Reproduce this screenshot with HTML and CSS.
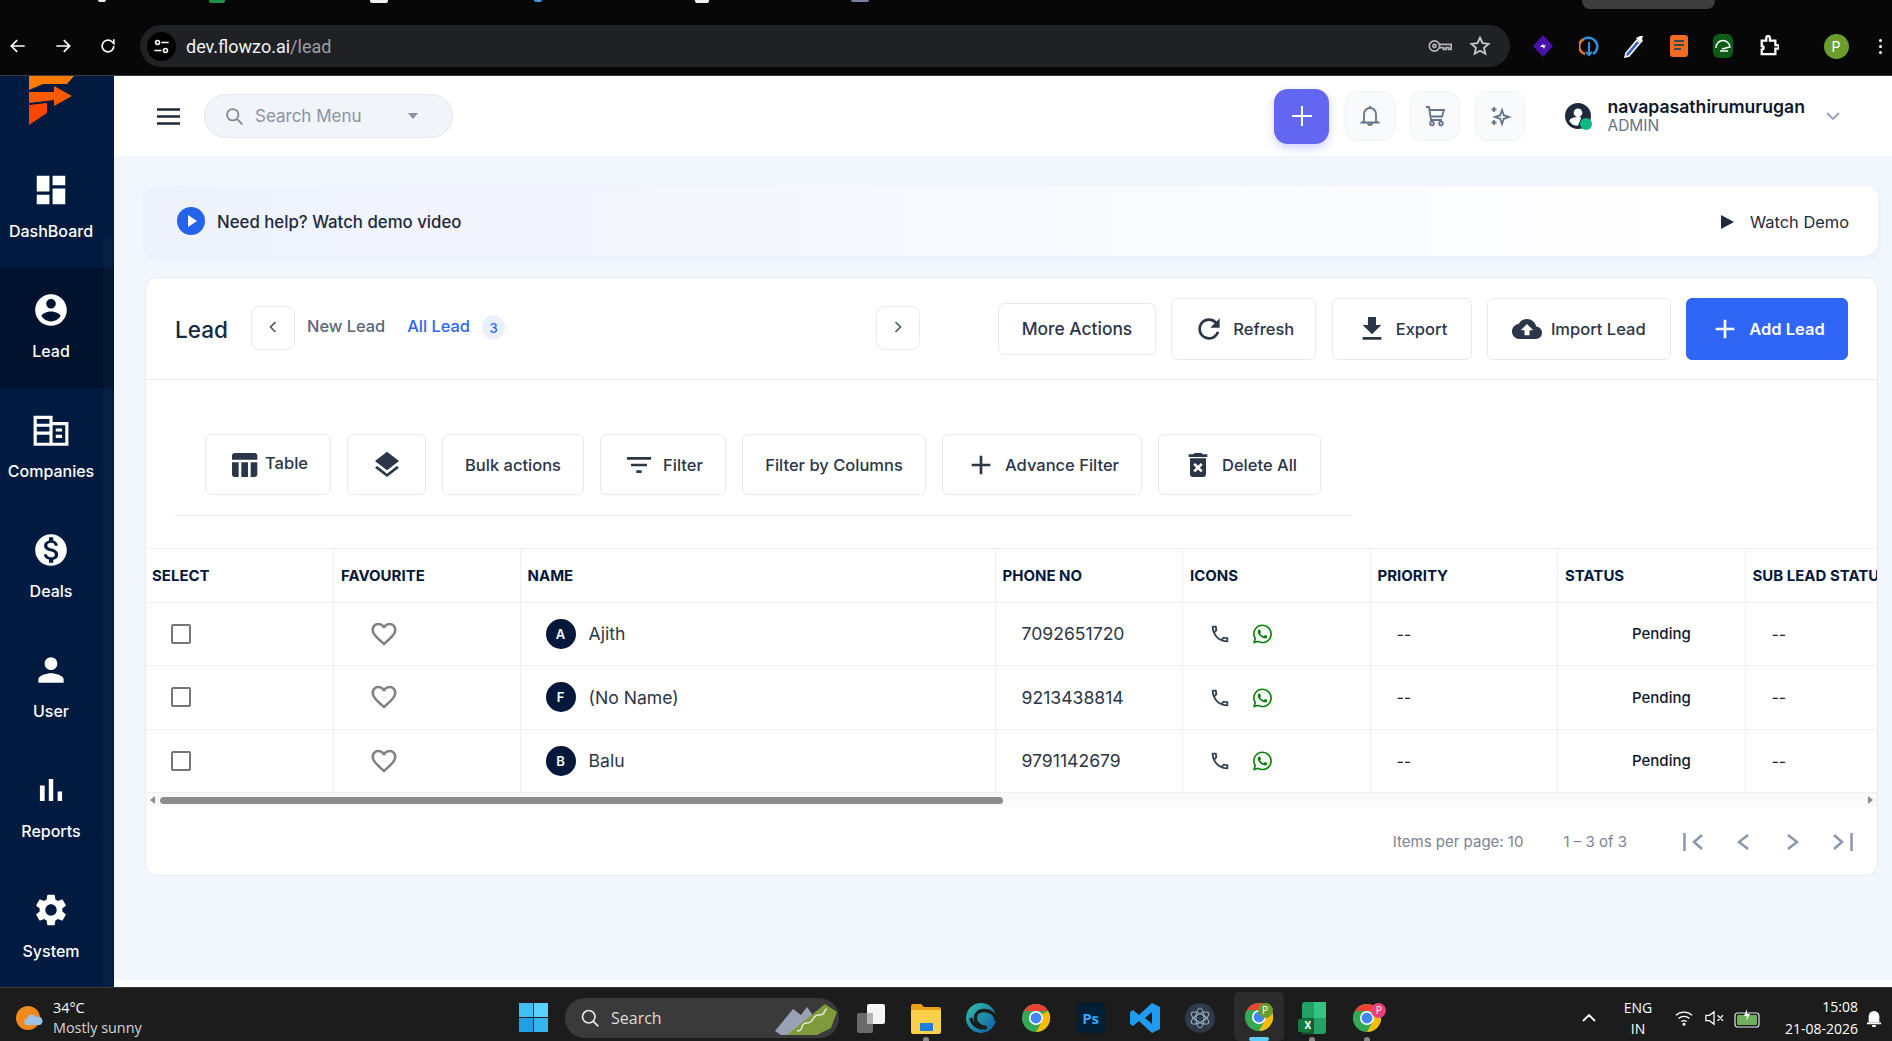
FILE: index.html
```html
<!DOCTYPE html>
<html lang="en">
<head>
    <meta charset="UTF-8">
    <meta name="viewport" content="width=device-width, initial-scale=1.0">
    <title>Lead</title>
    <link rel="stylesheet" href="styles.css">
</head>
<body>
    <svg class="sprite" width="0" height="0">
        <symbol id="i-phone" viewBox="0 0 24 24"><path d="M6.54 5c.06.89.21 1.76.45 2.59l-1.2 1.2c-.41-1.2-.67-2.47-.76-3.79h1.51m9.86 12.02c.85.24 1.72.39 2.6.45v1.49c-1.32-.09-2.59-.35-3.8-.75l1.2-1.19M7.5 3H4c-.55 0-1 .45-1 1 0 9.39 7.61 17 17 17 .55 0 1-.45 1-1v-3.49c0-.55-.45-1-1-1-1.24 0-2.45-.2-3.57-.57-.1-.04-.21-.05-.31-.05-.26 0-.51.1-.71.29l-2.2 2.2c-2.83-1.45-5.15-3.76-6.59-6.59l2.2-2.2c.28-.28.36-.67.25-1.02C8.7 6.45 8.5 5.25 8.5 4c0-.55-.45-1-1-1z"/></symbol>
        <symbol id="i-whatsapp" viewBox="0 0 16 16"><path d="M13.601 2.326A7.854 7.854 0 0 0 7.994 0C3.627 0 .068 3.558.064 7.926c0 1.399.366 2.76 1.057 3.965L0 16l4.204-1.102a7.933 7.933 0 0 0 3.79.965h.004c4.368 0 7.926-3.558 7.93-7.93A7.898 7.898 0 0 0 13.6 2.326zM7.994 14.521a6.573 6.573 0 0 1-3.356-.92l-.24-.144-2.494.654.666-2.433-.156-.251a6.56 6.56 0 0 1-1.007-3.505c0-3.626 2.957-6.584 6.591-6.584a6.56 6.56 0 0 1 4.66 1.931 6.557 6.557 0 0 1 1.928 4.66c-.004 3.639-2.961 6.592-6.592 6.592zm3.615-4.934c-.197-.099-1.17-.578-1.353-.646-.182-.065-.315-.099-.445.099-.133.197-.513.646-.627.775-.114.133-.232.148-.43.05-.197-.1-.836-.308-1.592-.985-.59-.525-.985-1.175-1.103-1.372-.114-.198-.011-.304.088-.403.087-.088.197-.232.296-.346.1-.114.133-.198.198-.33.065-.134.034-.248-.015-.347-.05-.099-.445-1.076-.612-1.47-.16-.389-.323-.335-.445-.34-.114-.007-.247-.007-.38-.007a.729.729 0 0 0-.529.247c-.182.198-.691.677-.691 1.654 0 .977.71 1.916.81 2.049.098.133 1.394 2.132 3.383 2.992.47.205.84.326 1.129.418.475.152.904.129 1.246.08.38-.058 1.171-.48 1.338-.943.164-.464.164-.86.114-.943-.049-.084-.182-.133-.38-.232z"/></symbol>
        <symbol id="i-heart" viewBox="0 0 24 24"><path d="M16.5 3c-1.74 0-3.41.81-4.5 2.09C10.91 3.81 9.24 3 7.5 3 4.42 3 2 5.42 2 8.5c0 3.78 3.4 6.86 8.55 11.54L12 21.35l1.45-1.32C18.6 15.36 22 12.28 22 8.5 22 5.42 19.58 3 16.5 3zm-4.4 15.55l-.1.1-.1-.1C7.14 14.24 4 11.39 4 8.5 4 6.5 5.5 5 7.5 5c1.54 0 3.04.99 3.57 2.36h1.87C13.46 5.99 14.96 5 16.5 5c2 0 3.5 1.5 3.5 3.5 0 2.89-3.14 5.74-7.9 10.05z"/></symbol>
        <symbol id="i-chrome" viewBox="0 0 32 32">
            <circle cx="16" cy="16" r="15" fill="#34a853"/>
            <path d="M16 1a15 15 0 0 1 13 7.500L16 8.500H8L3 8.800A15 15 0 0 1 16 1z" fill="#ea4335"/>
            <path d="M29 8.500A15 15 0 0 1 16 31l6.500-11.500L22.500 12z" fill="#fbbc04"/>
            <circle cx="16" cy="16" r="7.500" fill="#fff"/>
            <circle cx="16" cy="16" r="5.800" fill="#4285f4"/>
        </symbol>
    </svg>

    <header class="chrome">
        <div class="chrome-tabs">
            <i class="tab-bit bit-a"></i>
            <i class="tab-bit bit-b"></i>
            <i class="tab-bit bit-c"></i>
            <i class="tab-bit bit-d"></i>
            <i class="tab-bit bit-e"></i>
            <i class="tab-bit bit-f"></i>
            <span class="tab-stub"></span>
        </div>
        <div class="chrome-bar">
            <div class="nav-btns">
                <svg viewBox="0 0 24 24" class="chrome-icon"><path d="M20 12H5M11 5l-7 7 7 7"/></svg>
                <svg viewBox="0 0 24 24" class="chrome-icon"><path d="M4 12h15M13 5l7 7-7 7"/></svg>
                <svg viewBox="0 0 24 24" class="chrome-icon"><path d="M19 12a7 7 0 1 1-2.200-5.100L19 9V4"/></svg>
            </div>
            <div class="address">
                <span class="site-info">
                    <svg viewBox="0 0 24 24" class="site-icon"><circle cx="7" cy="7" r="2.500"/><circle cx="17" cy="17" r="2.500"/><path d="M12 7h9M3 17h9"/></svg>
                </span>
                <span class="url">dev.flowzo.ai<span class="url-path">/lead</span></span>
                <svg viewBox="0 0 28 16" class="key-icon"><circle cx="7.500" cy="8" r="6"/><circle cx="7.500" cy="8" r="1.800"/><path d="M13.500 6H27v6h-3v-2h-3v2h-3v-2h-4.500"/></svg>
                <svg viewBox="0 0 24 24" class="star-icon"><path d="M12 3l2.800 6 6.500.7-4.900 4.300 1.400 6.500L12 17.200 6.200 20.500l1.400-6.500L2.700 9.700 9.200 9z"/></svg>
            </div>
            <div class="extensions">
                <svg viewBox="0 0 20 24" width="20" height="24"><path d="M10 1l10 11-10 11L0 12z" fill="#4a12a8"/><path d="M7 13l3-3 1 2 2-2-2 5-1-2z" fill="#fff"/></svg>
                <svg viewBox="0 0 20 24" width="20" height="24" fill="none" stroke-width="2.500"><path d="M6 20a8 8 0 0 1-1-15" stroke="#e87a2a"/><path d="M5 5a8 8 0 1 1 9 15" stroke="#2f8fe0"/><path d="M10 8v13M7 18l3 3 3-3" stroke="#2f8fe0" stroke-width="2"/></svg>
                <svg viewBox="0 0 20 24" width="20" height="24"><path d="M13 6L2 19l-1 4 4-1L16 9z" fill="#3f62c8" stroke="#fff" stroke-width="1.500"/><path d="M12 4l5 5 2-2-1-2 1-3-3 0-2 1z" fill="#fff"/></svg>
                <svg viewBox="0 0 18 22" width="18" height="22"><rect width="18" height="22" rx="3" fill="#f26b21"/><path d="M4 6h10M4 10h10M4 14h7" stroke="#34495e" stroke-width="2"/></svg>
                <svg viewBox="0 0 20 24" width="20" height="24" fill="none"><rect width="20" height="24" rx="6" fill="#0f5a16"/><path d="M3 14a7 7 0 0 1 14-1l-8 2" stroke="#fff" stroke-width="1.500"/><path d="M7 17h8" stroke="#fff" stroke-width="1.500"/></svg>
                <svg viewBox="0 0 22 24" width="20" height="22" fill="none" stroke="#fff" stroke-width="2.500"><path d="M3 6h5V3a2 2 0 0 1 4 0v3h6v5h2a2 2 0 0 1 0 4h-2v6H3v-5a2 2 0 0 0 0-4V6z"/></svg>
            </div>
            <span class="profile-dot">P</span>
            <span class="more-dots"><i></i><i></i><i></i></span>
        </div>
    </header>

    <div class="app">
        <aside class="sidebar">
            <div class="logo">
                <svg viewBox="0 0 45 49" width="45" height="49">
                    <path d="M0 0H45L38 8H14L0 14z" fill="#ff7a00"/>
                    <path d="M0 16H25V10L43 20 25 30V24L0 27z" fill="#ff5a00"/>
                    <path d="M0 29L18 27V37L0 49z" fill="#ff4500"/>
                </svg>
            </div>
            <a class="side-item">
                <svg viewBox="0 0 24 24"><path d="M3 13h8V3H3v10zm0 8h8v-6H3v6zm10 0h8V11h-8v10zm0-18v6h8V3h-8z"/></svg>
                <span>DashBoard</span>
            </a>
            <a class="side-item active">
                <svg viewBox="0 0 24 24"><path d="M12 2C6.480 2 2 6.480 2 12s4.480 10 10 10 10-4.480 10-10S17.520 2 12 2zm0 3c1.660 0 3 1.340 3 3s-1.340 3-3 3-3-1.340-3-3 1.340-3 3-3zm0 14.200c-2.500 0-4.710-1.280-6-3.220.030-1.990 4-3.080 6-3.080 1.990 0 5.970 1.090 6 3.080-1.290 1.940-3.500 3.220-6 3.220z"/></svg>
                <span>Lead</span>
            </a>
            <a class="side-item">
                <svg viewBox="0 0 24 24"><path fill-rule="evenodd" d="M1 3h12v4h10v15H1zM3 5v3h8V5zm0 5v3h8v-3zm0 5v5h8v-5zm10-6v11h8V9zm2 2h4v2h-4zm0 4h4v2h-4z"/></svg>
                <span>Companies</span>
            </a>
            <a class="side-item">
                <svg viewBox="0 0 24 24"><path d="M12 2C6.480 2 2 6.480 2 12s4.480 10 10 10 10-4.480 10-10S17.520 2 12 2zm1.410 16.090V20h-2.670v-1.930c-1.710-.36-3.160-1.460-3.270-3.400h1.960c.1 1.050.82 1.870 2.650 1.870 1.960 0 2.400-.98 2.400-1.590 0-.83-.44-1.610-2.670-2.140-2.480-.6-4.180-1.620-4.180-3.670 0-1.720 1.390-2.840 3.110-3.210V4h2.670v1.950c1.860.45 2.790 1.860 2.850 3.390H14.300c-.05-1.110-.64-1.870-2.220-1.870-1.500 0-2.400.68-2.400 1.640 0 .84.65 1.390 2.670 1.910s4.180 1.390 4.180 3.910c-.01 1.830-1.380 2.830-3.120 3.160z"/></svg>
                <span>Deals</span>
            </a>
            <a class="side-item">
                <svg viewBox="0 0 24 24"><path d="M12 12c2.210 0 4-1.790 4-4s-1.790-4-4-4-4 1.790-4 4 1.790 4 4 4zm0 2c-2.670 0-8 1.340-8 4v2h16v-2c0-2.660-5.330-4-8-4z"/></svg>
                <span>User</span>
            </a>
            <a class="side-item">
                <svg viewBox="0 0 24 24"><path d="M5 9.200h3V19H5zM10.600 5h2.800v14h-2.800zm5.600 8H19v6h-2.800z"/></svg>
                <span>Reports</span>
            </a>
            <a class="side-item">
                <svg viewBox="0 0 24 24"><path d="M19.140 12.940c.04-.3.06-.61.06-.94 0-.32-.02-.64-.07-.94l2.030-1.580c.18-.14.23-.41.12-.61l-1.920-3.320c-.12-.22-.37-.29-.59-.22l-2.390.96c-.5-.38-1.030-.7-1.620-.94l-.36-2.540c-.04-.24-.24-.41-.48-.41h-3.840c-.24 0-.43.17-.47.41l-.36 2.540c-.59.24-1.130.57-1.620.94l-2.390-.96c-.22-.08-.47 0-.59.22L2.740 8.870c-.12.21-.08.47.12.61l2.030 1.580c-.05.3-.09.63-.09.94s.02.64.07.94l-2.030 1.580c-.18.14-.23.41-.12.61l1.920 3.320c.12.22.37.29.59.22l2.390-.96c.5.38 1.030.7 1.620.94l.36 2.540c.05.24.24.41.48.41h3.840c.24 0 .44-.17.47-.41l.36-2.540c.59-.24 1.130-.56 1.620-.94l2.390.96c.22.08.47 0 .59-.22l1.920-3.320c.12-.22.07-.47-.12-.61l-2.010-1.580zM12 15.600c-1.980 0-3.600-1.620-3.600-3.600s1.620-3.600 3.600-3.600 3.600 1.620 3.600 3.600-1.620 3.600-3.600 3.600z"/></svg>
                <span>System</span>
            </a>
            <span class="side-scroll"></span>
        </aside>

        <div class="main">
            <div class="topbar">
                <svg viewBox="0 0 23 17" class="hamburger"><path d="M0 1.500h23M0 8.500h23M0 15.500h23"/></svg>
                <div class="search-menu">
                    <svg viewBox="0 0 24 24" class="search-glass"><circle cx="10" cy="10" r="6.500"/><path d="M15 15l6 6"/></svg>
                    <span class="search-text">Search Menu</span>
                    <span class="search-caret"></span>
                </div>
                <div class="top-actions">
                    <button class="plus-btn">
                        <svg viewBox="0 0 24 24"><path d="M12 2v20M2 12h20"/></svg>
                    </button>
                    <button class="icon-btn">
                        <svg viewBox="0 0 24 24"><path d="M6 17V10a6 6 0 0 1 12 0v7l2 1.500H4zM12 2v2M10 19a2 2 0 0 0 4 0"/></svg>
                    </button>
                    <button class="icon-btn">
                        <svg viewBox="0 0 24 24"><path d="M3 3h3l2 13h11M7 6h14l-2 6.500H8"/><circle cx="9" cy="19.500" r="1.800"/><circle cx="18" cy="19.500" r="1.800"/></svg>
                    </button>
                    <button class="icon-btn">
                        <svg viewBox="0 0 24 24"><path d="M14 6l1.800 5.200L21 13l-5.200 1.800L14 20l-1.800-5.200L7 13l5.200-1.800zM6 3v5M3.500 5.500h5M6 16v5M3.500 18.500h5"/></svg>
                    </button>
                </div>
                <div class="user-box">
                    <span class="user-avatar">
                        <svg viewBox="0 0 24 24" width="26" height="26"><path fill="#1e293b" d="M12 0a12 12 0 1 0 0 24 12 12 0 0 0 0-24zm0 5a4 4 0 1 1 0 8 4 4 0 0 1 0-8zm0 16a9 9 0 0 1-8-4.500c1-3 5.500-3.500 8-3.500 1 0 2 .1 3 .3z"/></svg>
                        <i class="online-dot"></i>
                    </span>
                    <span class="user-text">
                        <strong>navapasathirumurugan</strong>
                        <small>ADMIN</small>
                    </span>
                    <svg viewBox="0 0 14 8" class="user-chevron"><path d="M1 1l6 6 6-6"/></svg>
                </div>
            </div>

            <main class="content">
                <div class="help-banner">
                    <span class="play-circle"><i></i></span>
                    <span class="help-text">Need help? Watch demo video</span>
                    <span class="watch-demo"><i></i>Watch Demo</span>
                </div>

                <section class="card">
                    <div class="card-head">
                        <h1>Lead</h1>
                        <div class="tabs">
                            <button class="tab-arrow"><svg viewBox="0 0 8 12"><path d="M6.500 1L1.500 6l5 5"/></svg></button>
                            <span class="tab">New Lead</span>
                            <span class="tab current">All Lead</span>
                            <span class="tab-count">3</span>
                            <button class="tab-arrow push-right"><svg viewBox="0 0 8 12"><path d="M1.500 1l5 5-5 5"/></svg></button>
                        </div>
                        <div class="head-actions">
                            <button class="btn short w-more">More Actions</button>
                            <button class="btn tall w-refresh"><svg viewBox="0 0 24 24"><path d="M17.650 6.350C16.200 4.900 14.210 4 12 4c-4.420 0-7.990 3.580-7.990 8s3.570 8 7.990 8c3.730 0 6.840-2.550 7.730-6h-2.080c-.82 2.330-3.040 4-5.650 4-3.310 0-6-2.690-6-6s2.690-6 6-6c1.660 0 3.140.69 4.220 1.780L13 11h7V4l-2.350 2.350z"/></svg>Refresh</button>
                            <button class="btn tall w-export"><svg viewBox="0 0 24 24"><path d="M19 9h-4V3H9v6H5l7 7 7-7zM5 18v2h14v-2H5z"/></svg>Export</button>
                            <button class="btn tall w-import"><svg viewBox="0 0 24 24" class="cloud"><path d="M19.350 10.040C18.670 6.590 15.640 4 12 4 9.110 4 6.600 5.640 5.350 8.040 2.340 8.360 0 10.910 0 14c0 3.310 2.690 6 6 6h13c2.760 0 5-2.240 5-5 0-2.640-2.050-4.780-4.650-4.960zM14 13v4h-4v-4H7l5-5 5 5h-3z"/></svg>Import Lead</button>
                            <button class="btn tall primary w-add"><svg viewBox="0 0 24 24"><path d="M19 13h-6v6h-2v-6H5v-2h6V5h2v6h6v2z"/></svg>Add Lead</button>
                        </div>
                    </div>

                    <div class="toolbar">
                        <button class="btn tool w-table"><svg viewBox="0 0 24 24" class="tight"><path d="M10 10.020h5V21h-5zM17 21h3c1.100 0 2-.9 2-2v-9h-5v11zm3-18H5c-1.100 0-2 .9-2 2v3h19V5c0-1.100-.9-2-2-2zM3 19c0 1.100.9 2 2 2h3V10H3v9z"/></svg><span class="raised">Table</span></button>
                        <button class="btn tool w-layers"><svg viewBox="0 0 24 24" class="solo"><path d="M11.990 18.540l-7.370-5.730L3 14.070l9 7 9-7-1.630-1.270-7.380 5.740zM12 16l7.360-5.730L21 9l-9-7-9 7 1.630 1.270L12 16z"/></svg></button>
                        <button class="btn tool w-bulk">Bulk actions</button>
                        <button class="btn tool w-filter"><svg viewBox="0 0 24 24"><path d="M10 18h4v-2h-4v2zM3 6v2h18V6H3zm3 7h12v-2H6v2z"/></svg>Filter</button>
                        <button class="btn tool w-columns">Filter by Columns</button>
                        <button class="btn tool w-advance"><svg viewBox="0 0 24 24"><path d="M19 13h-6v6h-2v-6H5v-2h6V5h2v6h6v2z"/></svg>Advance Filter</button>
                        <button class="btn tool w-delete"><svg viewBox="0 0 24 24"><path d="M6 19c0 1.100.9 2 2 2h8c1.100 0 2-.9 2-2V7H6v12zm2.460-7.120l1.410-1.410L12 12.590l2.120-2.120 1.410 1.410L13.410 14l2.120 2.120-1.410 1.410L12 15.410l-2.120 2.120-1.410-1.410L10.590 14l-2.130-2.120zM15.500 4l-1-1h-5l-1 1H5v2h14V4z"/></svg>Delete All</button>
                    </div>

                    <div class="table-wrap">
                        <table class="lead-table">
                            <colgroup>
                                <col class="col-select"><col class="col-fav"><col class="col-name"><col class="col-std"><col class="col-std"><col class="col-std"><col class="col-std"><col class="col-std">
                            </colgroup>
                            <thead>
                                <tr>
                                    <th>SELECT</th><th>FAVOURITE</th><th>NAME</th><th>PHONE NO</th><th>ICONS</th><th>PRIORITY</th><th>STATUS</th><th>SUB LEAD STATUS</th>
                                </tr>
                            </thead>
                            <tbody>
                                <tr>
                                    <td class="cell-check"><span class="checkbox"></span></td>
                                    <td class="cell-heart"><svg class="heart"><use href="#i-heart"/></svg></td>
                                    <td><div class="name-cell"><span class="initial">A</span>Ajith</div></td>
                                    <td class="cell-phone">7092651720</td>
                                    <td class="cell-icons"><svg class="ph"><use href="#i-phone"/></svg><svg class="wa"><use href="#i-whatsapp"/></svg></td>
                                    <td class="cell-dash">--</td>
                                    <td class="cell-status">Pending</td>
                                    <td class="cell-dash">--</td>
                                </tr>
                                <tr>
                                    <td class="cell-check"><span class="checkbox"></span></td>
                                    <td class="cell-heart"><svg class="heart"><use href="#i-heart"/></svg></td>
                                    <td><div class="name-cell"><span class="initial">F</span>(No Name)</div></td>
                                    <td class="cell-phone">9213438814</td>
                                    <td class="cell-icons"><svg class="ph"><use href="#i-phone"/></svg><svg class="wa"><use href="#i-whatsapp"/></svg></td>
                                    <td class="cell-dash">--</td>
                                    <td class="cell-status">Pending</td>
                                    <td class="cell-dash">--</td>
                                </tr>
                                <tr>
                                    <td class="cell-check"><span class="checkbox"></span></td>
                                    <td class="cell-heart"><svg class="heart"><use href="#i-heart"/></svg></td>
                                    <td><div class="name-cell"><span class="initial">B</span>Balu</div></td>
                                    <td class="cell-phone">9791142679</td>
                                    <td class="cell-icons"><svg class="ph"><use href="#i-phone"/></svg><svg class="wa"><use href="#i-whatsapp"/></svg></td>
                                    <td class="cell-dash">--</td>
                                    <td class="cell-status">Pending</td>
                                    <td class="cell-dash">--</td>
                                </tr>
                            </tbody>
                        </table>
                    </div>
                    <div class="fake-scroll">
                        <i class="arrow-left"></i>
                        <span class="thumb"></span>
                        <i class="arrow-right"></i>
                    </div>

                    <div class="pager">
                        <span class="pager-text per-page">Items per page: 10</span>
                        <span class="pager-text">1 – 3 of 3</span>
                        <svg viewBox="0 0 22 18" class="pager-icon first"><path d="M1.500 0v18M19 2l-8 7 8 7"/></svg>
                        <svg viewBox="0 0 12 18" class="pager-icon prev"><path d="M11 2L2 9l9 7"/></svg>
                        <svg viewBox="0 0 12 18" class="pager-icon next"><path d="M1 2l9 7-9 7"/></svg>
                        <svg viewBox="0 0 22 18" class="pager-icon last"><path d="M20.500 0v18M3 2l8 7-8 7"/></svg>
                    </div>
                </section>
            </main>
            <div class="main-foot"></div>
        </div>
    </div>

    <footer class="taskbar">
        <div class="weather">
            <svg viewBox="0 0 28 28" width="28" height="28"><circle cx="13" cy="14" r="12" fill="#f08a1c"/><path d="M11 21a4 4 0 0 1 1-7 5 5 0 0 1 9-1 4 4 0 0 1 4 8z" fill="#9cc3e6"/></svg>
            <div class="weather-text"><span>34°C</span><span class="dim">Mostly sunny</span></div>
        </div>
        <div class="task-center">
            <svg viewBox="0 0 29 29" width="29" height="29" class="win-logo">
                <rect width="14" height="14" fill="#3fc0f5"/><rect x="15" width="14" height="14" fill="#5ad1fb"/><rect y="15" width="14" height="14" fill="#1f9fe6"/><rect x="15" y="15" width="14" height="14" fill="#35b4f0"/>
            </svg>
            <div class="task-search">
                <svg viewBox="0 0 24 24" class="task-glass"><circle cx="10.500" cy="10.500" r="7.500"/><path d="M16 16l6 6"/></svg>
                <span>Search</span>
                <svg viewBox="0 0 62 34" width="62" height="34" class="task-scene">
                    <path d="M0 30L18 8l8 6 6-8 10 14-14 14H6z" fill="#9aa0b5"/>
                    <path d="M12 34L34 16 50 3l12 8-6 16-14 7z" fill="#7f9a3a"/>
                    <path d="M22 30c8 0 2-8 10-8s4-8 12-8 4-6 8-6" fill="none" stroke="#e8e8d8" stroke-width="1.500"/>
                </svg>
            </div>
            <span class="tb-app"><svg viewBox="0 0 30 30" width="30" height="30"><rect x="1" y="10" width="16" height="20" rx="2" fill="#6a6a6a"/><rect x="11" y="1" width="18" height="20" rx="2" fill="#f4f4f4"/><rect x="11" y="10" width="6" height="11" fill="#b4b4b4"/></svg></span>
            <span class="tb-app dotted"><svg viewBox="0 0 30 32" width="30" height="32"><path d="M0 4a2 2 0 0 1 2-2h8l3 3h15a2 2 0 0 1 2 2v3H0z" fill="#e8a317"/><path d="M0 8h30v22a2 2 0 0 1-2 2H2a2 2 0 0 1-2-2z" fill="#fbd14b"/><rect x="9" y="21" width="13" height="8" rx="1" fill="#1f7fd6"/></svg></span>
            <span class="tb-app"><svg viewBox="0 0 32 32" width="30" height="30"><defs><linearGradient id="edgeg" x1="0" y1="0" x2="1" y2="1"><stop offset="0" stop-color="#35c1a8"/><stop offset="1" stop-color="#0c59a8"/></linearGradient></defs><circle cx="16" cy="16" r="16" fill="url(#edgeg)"/><path d="M32 19c0-7-6-11-13-11-6 0-9 4-9 8 0 6 6 10 12 10-7 2-15-2-17-10" fill="none" stroke="#1c1c1c" stroke-width="3.500"/></svg></span>
            <span class="tb-app"><svg width="30" height="30"><use href="#i-chrome"/></svg></span>
            <span class="tb-app"><span class="ps-tile">Ps</span></span>
            <span class="tb-app"><svg viewBox="0 0 32 32" width="32" height="32"><path d="M23 1l8 4v22l-8 4-13-12-6 5-3-2v-12l3-2 6 5zM23 10l-7 6 7 6z" fill="#1f9cf0" fill-rule="evenodd"/></svg></span>
            <span class="tb-app"><svg viewBox="0 0 30 30" width="30" height="30" fill="none" stroke="#9fb4c2" stroke-width="1"><circle cx="15" cy="15" r="15" fill="#2f3a48" stroke="none"/><ellipse cx="15" cy="15" rx="10" ry="4" transform="rotate(30 15 15)"/><ellipse cx="15" cy="15" rx="10" ry="4" transform="rotate(-30 15 15)"/><ellipse cx="15" cy="15" rx="10" ry="4" transform="rotate(90 15 15)"/></svg></span>
            <span class="tb-app active-app">
                <svg width="30" height="30"><use href="#i-chrome"/></svg>
                <i class="badge-p green">P</i>
            </span>
            <span class="tb-app dotted"><svg viewBox="0 0 28 32" width="28" height="32"><rect x="4" y="0" width="24" height="32" rx="3" fill="#21a366"/><rect x="16" y="0" width="12" height="16" fill="#33c481"/><rect x="4" y="16" width="12" height="16" fill="#185c37"/><rect y="17" width="13" height="13" rx="2" fill="#107c41"/><text x="6.500" y="27" class="xl-text">X</text></svg></span>
            <span class="tb-app dotted">
                <svg width="30" height="30"><use href="#i-chrome"/></svg>
                <i class="badge-p pink">P</i>
            </span>
        </div>
        <div class="tray">
            <svg viewBox="0 0 14 8" class="tray-chev"><path d="M1 7l6-6 6 6"/></svg>
            <div class="tray-lang"><span>ENG</span><span>IN</span></div>
            <svg viewBox="0 0 20 20" class="tray-icon wifi"><path d="M1 7a13 13 0 0 1 18 0M4 10.500a9 9 0 0 1 12 0M7 14a5 5 0 0 1 6 0"/><circle cx="10" cy="17" r="1"/></svg>
            <svg viewBox="0 0 22 20" class="tray-icon"><path d="M2 7h4l5-4v14l-5-4H2zM15 7l6 6M21 7l-6 6"/></svg>
            <svg viewBox="0 0 26 20" class="tray-battery"><rect x="1" y="5" width="24" height="14" rx="2.500"/><rect x="3" y="7" width="20" height="10" rx="1" class="charge"/><path d="M13 1l-3 7h3l-1 5 4-7h-3z" class="bolt"/></svg>
            <div class="tray-clock"><span>15:08</span><span>21-08-2026</span></div>
            <svg viewBox="0 0 18 24" class="tray-bell"><path d="M3 17V10a6 6 0 0 1 12 0v7z"/><path d="M1 17h16v2H1zM7 20h4v2H7z"/></svg>
        </div>
    </footer>
</body>
</html>
```

FILE: styles.css
```css
* {
    box-sizing: border-box;
}

html, body {
    margin: 0;
    height: 100%;
}

body {
    display: flex;
    flex-direction: column;
    height: 1041px;
    overflow: hidden;
    font-family: Inter, "Liberation Sans", sans-serif;
    color: #2b3648;
    background-color: #fff;
}

button {
    font-family: inherit;
}

.sprite {
    position: absolute;
}

/* browser chrome */
.chrome {
    height: 76px;
    flex: none;
    background-color: #070707;
    border-bottom: 1px solid #3a3a3a;
}

.chrome-tabs {
    height: 25px;
    display: flex;
    padding-right: 177px;
}

.tab-bit {
    height: 2px;
    border-radius: 0 0 2px 2px;
    background-color: #f0f0f0;
}

.bit-a {
    width: 8px;
    margin-left: 98px;
}

.bit-b {
    width: 16px;
    margin-left: 103px;
    height: 3px;
    background-color: #1f8f4a;
}

.bit-c {
    width: 18px;
    margin-left: 145px;
    height: 3px;
}

.bit-d {
    width: 8px;
    margin-left: 146px;
    background-color: #3a9bdc;
}

.bit-e {
    width: 14px;
    margin-left: 153px;
    height: 3px;
}

.bit-f {
    width: 18px;
    margin-left: 142px;
    background-color: #7a7fa0;
}

.tab-stub {
    width: 133px;
    height: 9px;
    margin-left: auto;
    background-color: #3d3d3d;
    border-radius: 0 0 8px 8px;
}

.chrome-bar {
    height: 42px;
    display: flex;
    align-items: center;
}

.nav-btns {
    width: 140px;
    display: flex;
    gap: 25px;
    padding-left: 8px;
}

.chrome-icon {
    width: 20px;
    height: 20px;
    fill: none;
    stroke: #fff;
    stroke-width: 2;
}

.address {
    width: 1370px;
    height: 42px;
    display: flex;
    align-items: center;
    background-color: #202124;
    border-radius: 21px;
    padding-left: 7px;
    padding-right: 19px;
}

.site-info {
    width: 29px;
    height: 29px;
    border-radius: 50%;
    background-color: #000;
    display: flex;
    align-items: center;
    justify-content: center;
}

.site-icon {
    width: 19px;
    height: 19px;
    fill: none;
    stroke: #fff;
    stroke-width: 2;
}

.url {
    margin-left: 10px;
    font-family: Roboto, sans-serif;
    font-size: 18px;
    color: #f1f3f4;
    flex: 1;
}

.url-path {
    color: #9aa0a6;
}

.key-icon {
    width: 24px;
    height: 18px;
    fill: none;
    stroke: #b5b5b5;
    stroke-width: 2;
    margin-right: 17px;
}

.star-icon {
    width: 22px;
    height: 22px;
    fill: none;
    stroke: #c8c8c8;
    stroke-width: 2;
}

.extensions {
    display: flex;
    align-items: center;
    gap: 25.5px;
    margin-left: 23px;
}

.profile-dot {
    width: 25px;
    height: 25px;
    border-radius: 50%;
    background-color: #6a9e2f;
    color: #fff;
    font-size: 14px;
    display: flex;
    align-items: center;
    justify-content: center;
    margin-left: 45px;
}

.more-dots {
    display: flex;
    flex-direction: column;
    gap: 3px;
    margin-left: 30px;
}

.more-dots i {
    width: 3px;
    height: 3px;
    border-radius: 50%;
    background-color: #fff;
}

/* app frame */
.app {
    flex: 1;
    display: flex;
    min-height: 0;
}

.sidebar {
    position: relative;
    width: 114px;
    flex: none;
    background-color: #011a3f;
    overflow: hidden;
}

.logo {
    height: 72px;
    padding-left: 29px;
}

.logo svg {
    display: block;
}

.side-item {
    height: 120px;
    flex: none;
    display: flex;
    flex-direction: column;
    align-items: center;
    padding-top: 23px;
    padding-right: 12px;
    color: #fff;
    font-size: 16px;
    font-weight: 500;
    line-height: 20px;
}

.side-item svg {
    width: 38px;
    height: 38px;
    fill: #fff;
    margin-bottom: 12px;
}

.side-item.active {
    background-color: #00122e;
}

.side-scroll {
    position: absolute;
    top: 160px;
    right: 2px;
    bottom: 0;
    width: 9px;
    background-color: rgba(255, 255, 255, 0.025);
}

.main {
    flex: 1;
    min-width: 0;
    display: flex;
    flex-direction: column;
}

/* top header */
.topbar {
    height: 80px;
    flex: none;
    background-color: #fff;
    display: flex;
    align-items: center;
    padding-left: 43px;
    padding-right: 52px;
}

.hamburger {
    width: 23px;
    height: 17px;
    fill: none;
    stroke: #1e293b;
    stroke-width: 2.5;
}

.search-menu {
    width: 249px;
    height: 44px;
    margin-left: 24px;
    background-color: #f1f4f8;
    border: 1px solid #e4e8ef;
    border-radius: 22px;
    display: flex;
    align-items: center;
    padding-left: 19px;
    color: #8a93a3;
    font-size: 17px;
}

.search-glass {
    width: 21px;
    height: 21px;
    fill: none;
    stroke: #7f8896;
    stroke-width: 2;
}

.search-text {
    margin-left: 10px;
    flex: 1;
}

.search-caret {
    width: 0;
    height: 0;
    border-left: 5.5px solid transparent;
    border-right: 5.5px solid transparent;
    border-top: 6px solid #8a93a3;
    margin-right: 34px;
}

.top-actions {
    margin-left: auto;
    display: flex;
    align-items: center;
    gap: 15.4px;
}

.plus-btn {
    width: 55px;
    height: 55px;
    border: none;
    border-radius: 14px;
    background-color: #6366f1;
    box-shadow: 0 4px 10px rgba(99, 102, 241, 0.3);
    display: flex;
    align-items: center;
    justify-content: center;
    padding: 0;
}

.plus-btn svg {
    width: 24px;
    height: 24px;
    fill: none;
    stroke: #fff;
    stroke-width: 2;
}

.icon-btn {
    width: 50px;
    height: 50px;
    border: 1px solid #eef1f6;
    border-radius: 13px;
    background-color: #f8fafc;
    display: flex;
    align-items: center;
    justify-content: center;
    padding: 0;
}

.icon-btn svg {
    width: 24px;
    height: 24px;
    fill: none;
    stroke: #64748b;
    stroke-width: 1.8;
}

.user-box {
    display: flex;
    align-items: center;
    margin-left: 40px;
}

.user-avatar {
    position: relative;
    display: flex;
    width: 26px;
    height: 26px;
}

.online-dot {
    position: absolute;
    right: -1px;
    bottom: -1px;
    width: 12px;
    height: 12px;
    border-radius: 50%;
    background-color: #10b981;
}

.user-text {
    display: flex;
    flex-direction: column;
    margin-left: 16px;
}

.user-text strong {
    font-size: 17.6px;
    font-weight: 600;
    color: #0f172a;
    line-height: 20px;
}

.user-text small {
    font-size: 15.5px;
    color: #64748b;
    line-height: 18px;
}

.user-chevron {
    width: 14px;
    height: 8px;
    fill: none;
    stroke: #94a3b8;
    stroke-width: 1.8;
    margin-left: 21px;
}

/* page content */
.content {
    flex: 1;
    min-height: 0;
    overflow: hidden;
    background-color: #f2f6fd;
    padding: 30px 14px 0 31px;
}

.main-foot {
    height: 7px;
    flex: none;
    background-color: #fff;
}

.help-banner {
    height: 70px;
    display: flex;
    align-items: center;
    padding: 0 29px 0 32px;
    border-radius: 14px;
    background: linear-gradient(90deg, #eef2fd 0%, #ffffff 90%);
    box-shadow: 0 2px 6px rgba(30, 60, 120, 0.05);
}

.play-circle {
    width: 28px;
    height: 28px;
    border-radius: 50%;
    background-color: #2563eb;
    display: flex;
    align-items: center;
    justify-content: center;
}

.play-circle i {
    width: 0;
    height: 0;
    border-left: 9px solid #fff;
    border-top: 6px solid transparent;
    border-bottom: 6px solid transparent;
    margin-left: 3px;
}

.help-text {
    margin-left: 12px;
    padding-top: 2px;
    font-size: 16.8px;
    font-weight: 500;
    color: #1e293b;
    flex: 1;
}

.watch-demo {
    display: flex;
    align-items: center;
    padding-top: 2px;
    font-size: 16.4px;
    color: #1e293b;
}

.watch-demo i {
    width: 0;
    height: 0;
    border-left: 13px solid #1e293b;
    border-top: 7px solid transparent;
    border-bottom: 7px solid transparent;
    margin-right: 16px;
}

.card {
    margin-top: 21px;
    height: 599px;
    background-color: #fff;
    border: 1px solid #e6eaf3;
    border-radius: 12px;
    overflow: hidden;
}

.card-head {
    height: 102px;
    display: flex;
    align-items: center;
    padding: 0 29px;
    border-bottom: 1px solid #e6eaf3;
}

.card-head h1 {
    margin: 0;
    width: 76px;
    padding-top: 2px;
    font-size: 22.5px;
    font-weight: 500;
    color: #12293f;
}

.tabs {
    width: 669px;
    display: flex;
    align-items: center;
    font-size: 16.4px;
    font-weight: 500;
}

.tab-arrow {
    width: 44px;
    height: 44px;
    margin-bottom: 2px;
    border: 1px solid #e6eaf3;
    border-radius: 8px;
    background-color: #fff;
    padding: 0;
    display: flex;
    align-items: center;
    justify-content: center;
}

.tab-arrow svg {
    width: 8px;
    height: 12px;
    margin-bottom: 2px;
    fill: none;
    stroke: #475569;
    stroke-width: 1.6;
}

.push-right {
    margin-left: auto;
}

.tab {
    margin-left: 12px;
    margin-bottom: 5px;
    color: #5b6678;
}

.tab.current {
    margin-left: 22px;
    color: #2f66f6;
}

.tab-count {
    width: 23px;
    height: 25px;
    margin-left: 12px;
    margin-bottom: 2px;
    border-radius: 50%;
    background-color: #e9effd;
    color: #2f66f6;
    font-size: 13px;
    display: flex;
    align-items: center;
    justify-content: center;
}

.head-actions {
    margin-left: auto;
    display: flex;
    align-items: center;
    gap: 15.25px;
}

.btn {
    display: flex;
    align-items: center;
    justify-content: center;
    border: 1px solid #e6eaf3;
    border-radius: 6px;
    background-color: #fff;
    color: #2b3648;
    font-size: 16.5px;
    font-weight: 500;
    padding: 0;
    white-space: nowrap;
}

.btn svg {
    width: 32px;
    height: 32px;
    fill: #2b3648;
    margin-right: 8px;
    flex: none;
}

.btn svg.cloud {
    width: 30px;
    height: 30px;
    margin-right: 9px;
}

.btn svg.tight {
    margin-right: 5px;
}

.btn svg.solo {
    margin-right: 0;
}

.btn.short {
    height: 52px;
    font-size: 17.4px;
}

.btn.tall {
    height: 62px;
}

.btn.primary {
    background-color: #2f66f6;
    border-color: #2f66f6;
    color: #fff;
    font-weight: 600;
}

.btn.primary svg {
    fill: #fff;
}

.w-more { width: 158px; }
.w-refresh { width: 145px; }
.w-export { width: 140px; }
.w-import { width: 184px; }
.w-add { width: 162px; }
.w-table { width: 126px; }
.w-layers { width: 79px; }
.w-bulk { width: 142px; }
.w-filter { width: 126px; }
.w-columns { width: 184px; }
.w-advance { width: 200px; }
.w-delete { width: 163px; }

.toolbar {
    display: flex;
    gap: 16px;
    margin-left: 29px;
    width: 1176px;
    padding: 54px 0 20px 30px;
    border-bottom: 1px solid #e6eaf3;
}

.btn.tool {
    height: 61px;
}

.raised {
    margin-top: -3px;
}

/* table */
.table-wrap {
    margin-top: 32px;
    overflow: hidden;
    border-top: 1px solid #edf0f5;
}

.lead-table {
    border-collapse: collapse;
    table-layout: fixed;
    width: 1788px;
    margin-left: -1px;
}

.col-select {
    width: 188.5px;
}

.col-fav {
    width: 186.5px;
}

.col-std {
    width: 187.5px;
}

.col-name {
    width: 475px;
}

.lead-table th,
.lead-table td {
    border-bottom: 1px solid #edf0f5;
    border-right: 1px solid #edf0f5;
    padding: 0;
}

.lead-table th {
    height: 53px;
    padding-left: 7px;
    text-align: left;
    font-size: 15px;
    font-weight: 700;
    color: #03183a;
    white-space: nowrap;
    overflow: hidden;
}

.lead-table td {
    height: 63.5px;
    font-size: 17.6px;
    color: #2b3648;
}

.cell-check {
    padding-left: 26px !important;
}

.checkbox {
    display: block;
    width: 20px;
    height: 20px;
    border: 2px solid #767676;
    border-radius: 2px;
}

.cell-heart {
    padding-left: 35px !important;
}

.heart {
    display: block;
    width: 30px;
    height: 30px;
    fill: #808080;
}

.name-cell {
    display: flex;
    align-items: center;
    padding-left: 25px;
}

.initial {
    width: 30px;
    height: 30px;
    border-radius: 50%;
    background-color: #03183a;
    color: #fff;
    font-size: 13px;
    font-weight: 600;
    display: flex;
    align-items: center;
    justify-content: center;
    margin-right: 13px;
}

.cell-phone {
    padding-left: 26px !important;
}

.cell-icons {
    padding-left: 26px !important;
}

.cell-icons svg {
    vertical-align: middle;
}

.ph {
    width: 22px;
    height: 22px;
    fill: #334155;
}

.wa {
    width: 19px;
    height: 20px;
    fill: #008000;
    margin-left: 22px;
}

.cell-dash {
    padding-left: 26px !important;
    font-size: 16px !important;
    color: #1e293b !important;
}

.cell-status {
    padding-left: 74px !important;
    font-size: 15px !important;
    font-weight: 500;
    color: #0f172a !important;
}

.fake-scroll {
    height: 14px;
    display: flex;
    align-items: center;
    background-color: #fafafa;
    padding: 0 4px;
}

.thumb {
    width: 843px;
    height: 7px;
    margin-left: 5px;
    border-radius: 4px;
    background-color: #8c8c8c;
}

.arrow-left,
.arrow-right {
    width: 0;
    height: 0;
    border-top: 4px solid transparent;
    border-bottom: 4px solid transparent;
}

.arrow-left {
    border-right: 5px solid #8c8c8c;
}

.arrow-right {
    border-left: 5px solid #8c8c8c;
    margin-left: auto;
}

.pager {
    height: 69px;
    display: flex;
    align-items: center;
    justify-content: flex-end;
    padding-right: 24px;
}

.pager-text {
    font-size: 15px;
    color: #7b8494;
}

.per-page {
    margin-right: 40px;
}

.pager-icon {
    height: 18px;
    fill: none;
    stroke: #8a97ab;
    stroke-width: 2.5;
}

.pager-icon.first {
    width: 22px;
    margin-left: 56px;
}

.pager-icon.prev,
.pager-icon.next {
    width: 12px;
}

.pager-icon.prev {
    margin-left: 32px;
}

.pager-icon.next {
    margin-left: 38px;
}

.pager-icon.last {
    width: 22px;
    margin-left: 32px;
}

/* windows taskbar */
.taskbar {
    height: 54px;
    flex: none;
    display: flex;
    align-items: center;
    padding-top: 6px;
    background-color: #1c1c1c;
    border-top: 1px solid #3a3a3a;
    color: #fff;
    font-family: "Open Sans", sans-serif;
    font-size: 14px;
}

.weather {
    display: flex;
    align-items: center;
    width: 519px;
    padding-left: 15px;
}

.weather-text {
    display: flex;
    flex-direction: column;
    margin-left: 10px;
    font-size: 14.4px;
    line-height: 20px;
}

.dim {
    color: #d6d6d6;
}

.task-center {
    display: flex;
    align-items: center;
    height: 100%;
}

.task-search {
    width: 274px;
    height: 40px;
    margin-left: 17px;
    margin-right: 5px;
    display: flex;
    align-items: center;
    background-color: #3a3a3a;
    border-radius: 20px;
    padding-left: 15px;
    font-size: 16px;
    color: #dcdcdc;
}

.task-glass {
    width: 20px;
    height: 20px;
    fill: none;
    stroke: #e8e8e8;
    stroke-width: 2;
    margin-right: 11px;
}

.task-scene {
    margin-left: auto;
    margin-right: 2px;
}

.tb-app {
    position: relative;
    width: 54.8px;
    height: 100%;
    display: flex;
    align-items: center;
    justify-content: center;
}

.tb-app.dotted::after {
    content: "";
    position: absolute;
    left: 50%;
    bottom: 0;
    width: 6px;
    height: 4px;
    margin-left: -3px;
    border-radius: 3px 3px 0 0;
    background-color: #8a8a8a;
}

.active-app {
    width: 50px;
    height: 49px;
    margin: -2px 1px 0 6px;
    background-color: #2b2b2b;
    border-radius: 5px;
}

.active-app::after {
    content: "";
    position: absolute;
    left: 50%;
    bottom: 0;
    width: 20px;
    height: 4px;
    margin-left: -10px;
    border-radius: 2px;
    background-color: #60cdff;
}

.badge-p {
    position: absolute;
    top: 9px;
    right: 8px;
    width: 15px;
    height: 15px;
    border-radius: 50%;
    color: #fff;
    font-style: normal;
    font-size: 10px;
    line-height: 15px;
    text-align: center;
}

.badge-p.green {
    top: 11px;
    right: 11px;
    background-color: #6a9e2f;
}

.badge-p.pink {
    background-color: #ec3f7c;
}

.ps-tile {
    width: 28px;
    height: 30px;
    border-radius: 4px;
    background-color: #001e36;
    color: #31a8ff;
    font-size: 15px;
    font-weight: 700;
    display: flex;
    align-items: center;
    justify-content: center;
}

.xl-text {
    fill: #fff;
    font-size: 10px;
    font-weight: 700;
}

.tray {
    margin-left: auto;
    display: flex;
    align-items: center;
    height: 100%;
}

.tray-chev {
    width: 14px;
    height: 8px;
    fill: none;
    stroke: #fff;
    stroke-width: 1.8;
}

.tray-lang {
    width: 40px;
    margin-left: 22px;
    display: flex;
    flex-direction: column;
    align-items: center;
    line-height: 21px;
}

.tray-icon {
    width: 20px;
    height: 18px;
    fill: none;
    stroke: #fff;
    stroke-width: 1.4;
    margin-left: 12px;
}

.tray-icon.wifi {
    margin-left: 16px;
    margin-right: -2px;
}

.tray-battery {
    width: 26px;
    height: 20px;
    fill: none;
    stroke: #e6e6e6;
    stroke-width: 1.2;
    margin-left: 10px;
}

.tray-battery .charge {
    fill: #6fae5a;
    stroke: none;
}

.tray-battery .bolt {
    fill: #fff;
    stroke: none;
}

.tray-clock {
    display: flex;
    flex-direction: column;
    align-items: flex-end;
    width: 86px;
    margin-left: 12px;
    line-height: 22px;
}

.tray-bell {
    width: 16px;
    height: 22px;
    fill: #fff;
    margin-left: 8px;
    margin-right: 10px;
}
```
